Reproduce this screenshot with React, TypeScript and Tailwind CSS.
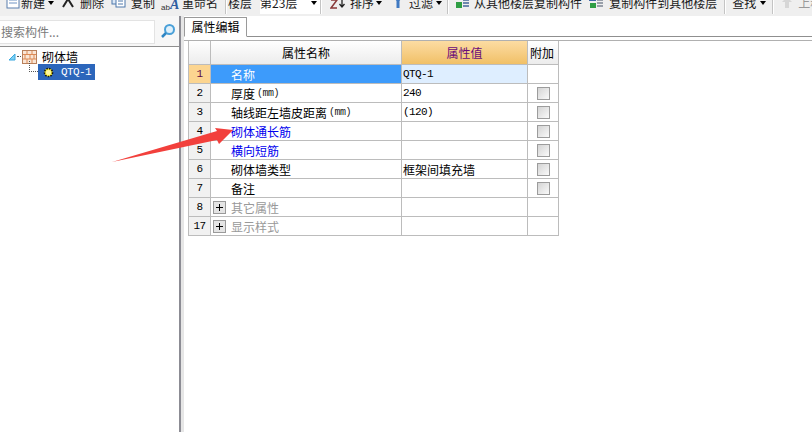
const cjk = "font-['Noto_Sans_CJK_SC','Liberation_Sans',sans-serif] text-[12px] leading-none";
const mono = "font-['Liberation_Mono','Noto_Sans_CJK_SC',monospace] text-[11px] tracking-[-0.6px]";

function Caret() {
  return <span className="block w-0 h-0 border-x-[3px] border-x-transparent border-t-[4px] border-t-black" />;
}

function Sep() {
  return <span className="block w-[2px] h-full bg-[#c4c4c4] border-r border-white" />;
}

function Toolbar() {
  return (
    <div className={`${cjk} h-4 flex bg-[#efefef] text-[#1a1a1a] overflow-hidden`}>
      <div className="flex items-center h-[16px] -mt-[5px] whitespace-nowrap">
        <svg width="16" height="16" className="ml-[5px] mt-[3px]" viewBox="0 0 16 16">
          <rect x="2" y="0" width="12" height="11" fill="#fff" stroke="#5b7fae" />
          <path d="M4 3h8M4 6h8" stroke="#6f93c4" />
        </svg>
        <span>新建</span>
        <span className="ml-[3px]"><Caret /></span>
        <svg width="12" height="12" className="ml-[8px]" viewBox="0 0 12 12">
          <path d="M1 10 6 2l5 8" fill="none" stroke="#222" strokeWidth="2" />
        </svg>
        <span className="ml-[6px]">删除</span>
        <svg width="15" height="14" className="ml-[7px]" viewBox="0 0 15 14">
          <rect x="1" y="0" width="8" height="8" fill="#dce8f6" stroke="#4f78ab" />
          <rect x="5" y="2" width="9" height="9" fill="#fff" stroke="#4f78ab" />
          <path d="M7 5h5M7 8h5" stroke="#4f78ab" />
        </svg>
        <span className="ml-[5px]">复制</span>
        <span className="ml-[6px] w-[16px] flex items-end text-[#333] mt-[3px]">
          <span className="font-['Liberation_Sans'] text-[8px]">ab</span>
          <span className="font-['Liberation_Serif'] text-[14px] font-bold italic text-[#2f5d9e]">A</span>
        </span>
        <span className="ml-[5px]">重命名</span>
        <span className="ml-[7px] h-[21px] flex"><Sep /></span>
        <span className="ml-[1px]">楼层</span>
        <span className="ml-[8px] w-[60px] bg-white h-[21px] flex items-center">
          第23层
          <span className="ml-[14px]"><Caret /></span>
        </span>
        <span className="h-[21px] flex"><Sep /></span>
        <svg width="16" height="14" className="ml-[8px]" viewBox="0 0 16 14">
          <path d="M1 4h6L1 12h6" fill="none" stroke="#8a3a3a" strokeWidth="1.5" />
          <path d="M12 1v10M9.5 8l2.5 3 2.5-3" fill="none" stroke="#222" strokeWidth="1.3" />
        </svg>
        <span className="ml-[4px]">排序</span>
        <span className="ml-[2px]"><Caret /></span>
        <svg width="10" height="14" className="ml-[11px]" viewBox="0 0 10 14">
          <path d="M0 0h10L6.5 5v7h-3V5z" fill="#3f79c2" />
        </svg>
        <span className="ml-[6px]">过滤</span>
        <span className="ml-[3px]"><Caret /></span>
        <span className="ml-[5px] h-[21px] flex"><Sep /></span>
        <svg width="14" height="14" className="ml-[6px]" viewBox="0 0 14 14">
          <rect x="0" y="0" width="7" height="4" fill="#5d7fa8" />
          <rect x="1" y="6" width="6" height="6" fill="#2f9e44" />
          <path d="M8 1h6M8 4h6M8 7h6M8 10h6" stroke="#44679a" strokeWidth="1.6" />
        </svg>
        <span className="ml-[5px]">从其他楼层复制构件</span>
        <svg width="14" height="14" className="ml-[7px]" viewBox="0 0 14 14">
          <rect x="0" y="0" width="7" height="5" fill="#3f67a8" />
          <rect x="1" y="7" width="6" height="5" fill="#2f9e44" />
          <path d="M8 1h6M8 4h6M8 7h6M8 10h6" stroke="#7d8794" strokeWidth="1.6" />
        </svg>
        <span className="ml-[6px]">复制构件到其他楼层</span>
        <span className="ml-[7px] h-[21px] flex"><Sep /></span>
        <span className="ml-[6px]">查找</span>
        <span className="ml-[4px]"><Caret /></span>
        <span className="ml-[6px] h-[21px] flex"><Sep /></span>
        <svg width="10" height="12" className="ml-[8px]" viewBox="0 0 10 12">
          <path d="M5 0 10 5H7v6H3V5H0z" fill="#d6d6d6" />
        </svg>
        <span className="ml-[6px] text-[#999]">上移</span>
      </div>
    </div>
  );
}

function Tree() {
  return (
    <div className={`${cjk} relative pl-2 pt-[2px] text-black`}>
      <div className="flex items-center h-[15px]">
        <svg width="8" height="8" viewBox="0 0 8 8">
          <path d="M7 1v6H1z" fill="#7fd0f2" stroke="#38a8e0" />
        </svg>
        <span className="w-[6px] ml-[1px] border-t border-dotted border-[#555]" />
        <svg width="15" height="14" className="ml-[-1px]" viewBox="0 0 15 14">
          <rect x="0.5" y="0.5" width="14" height="13" fill="#f9e6d6" stroke="#b9805b" />
          <path d="M1 4.5h13M1 9h13M5 1v3.5M10 1v3.5M3 4.5V9M8 4.5V9M12 4.5V9M5 9v4M10 9v4" stroke="#dd8a55" />
        </svg>
        <span className="ml-[5px]">砌体墙</span>
      </div>
      <div className="flex items-center ml-[21px] h-[16px]">
        <span className="w-[9px] h-[11px] -mt-[11px] border-l border-b border-dotted border-[#555]" />
        <div className="w-[57px] h-[16px] bg-[#2c66bb] flex items-center text-white">
          <svg width="11" height="11" className="ml-[5px]" viewBox="0 0 11 11">
            <circle cx="5.5" cy="5.5" r="4" fill="#f8ee30" stroke="#111" strokeWidth="1.6" strokeDasharray="1.5 1.2" />
            <circle cx="5.5" cy="5.5" r="2.5" fill="#fdf7a0" />
          </svg>
          <span className={`${mono} ml-[7px]`}>QTQ-1</span>
        </div>
      </div>
    </div>
  );
}

function LeftPanel() {
  return (
    <div className="w-[179px] shrink-0 flex flex-col bg-white">
      <div className="h-[31px] pt-[4px] flex items-start bg-[#f7f7f7] border-b border-b-[#8f8f8f]">
        <div className={`${cjk} w-[155px] h-[24px] bg-white border border-[#e3e3e3] border-l-0 flex items-center pl-px text-[#7a7a7a]`}>
          搜索构件...
        </div>
        <svg width="16" height="16" className="ml-[5px] mt-[3px]" viewBox="0 0 16 16">
          <circle cx="9.5" cy="6.5" r="4.5" fill="#dff0fb" stroke="#4aa0d8" strokeWidth="2" />
          <path d="M6 10l-4 4" stroke="#2f86c4" strokeWidth="2.5" />
        </svg>
      </div>
      <Tree />
    </div>
  );
}

function Splitter() {
  return (
    <div className="w-[9px] shrink-0 flex">
      <span className="w-[2px] bg-[#8c8c94]" />
      <span className="w-[3px] bg-[#e6e6e6]" />
      <span className="w-px bg-[#9a9aa4]" />
      <span className="w-[3px] bg-white" />
    </div>
  );
}

const rows = [
  { no: "1", name: "名称", val: "QTQ-1", active: true },
  { no: "2", name: "厚度", unit: "(mm)", val: "240", check: true },
  { no: "3", name: "轴线距左墙皮距离", unit: "(mm)", val: "(120)", check: true },
  { no: "4", name: "砌体通长筋", blue: true, check: true },
  { no: "5", name: "横向短筋", blue: true, check: true },
  { no: "6", name: "砌体墙类型", val: "框架间填充墙", check: true },
  { no: "7", name: "备注", check: true },
  { no: "8", name: "其它属性", group: true },
  { no: "17", name: "显示样式", group: true },
];

function Row({ r }: { r: (typeof rows)[number] }) {
  return (
    <div className="flex h-[19px] border-b border-[#bcbcbc]">
      <div className={`${mono} w-[22px] shrink-0 flex items-center justify-center pt-px border-r border-[#bcbcbc] ${r.active ? "bg-[#fcd590] text-[#5a0a4a]" : "bg-[#f1f1f1] text-black"}`}>
        {r.no}
      </div>
      <div className={`w-[191px] shrink-0 flex items-center pt-px border-r border-[#bcbcbc] ${r.active ? "bg-[#3d9bfb] text-white" : r.blue ? "text-[#0000ee]" : r.group ? "text-[#999]" : "text-black"}`}>
        {r.group ? (
          <span className="ml-[2px] mr-[5px] w-[13px] h-[13px] bg-[#e4e4e4] border border-[#9a9a9a] flex items-center justify-center relative">
            <span className="absolute w-[7px] h-px bg-black" />
            <span className="absolute h-[7px] w-px bg-black" />
          </span>
        ) : (
          <span className="w-[20px]" />
        )}
        <span>{r.name}</span>
        {r.unit && <span className="font-['Liberation_Mono',monospace] text-[10px] tracking-[-0.5px] ml-[2px] text-[#222]">{r.unit}</span>}
      </div>
      <div className={`w-[126px] shrink-0 flex items-center pl-[1px] pt-px border-r border-[#bcbcbc] ${r.active ? "bg-[#deeeff]" : ""}`}>
        {r.val && <span className={r.val === "框架间填充墙" ? "" : mono}>{r.val}</span>}
      </div>
      <div className="w-[31px] shrink-0 flex items-center justify-center border-r border-[#bcbcbc]">
        {r.check && <span className="w-[13px] h-[13px] border border-[#9c9c9c] bg-gradient-to-br from-[#d4d4d4] to-[#fafafa]" />}
      </div>
    </div>
  );
}

function PropertyPanel() {
  return (
    <div className={`${cjk} flex-1 flex flex-col bg-white text-black -ml-[4px]`}>
      <div className="h-[21px] flex items-end border-b border-[#8f8f8f]">
        <div className="w-[63px] h-[20px] -mb-px flex items-center justify-center bg-white border border-[#9a9a9a] border-b-white">
          属性编辑
        </div>
      </div>
      <div className="h-[4px] border-b border-[#b0b0b0]" />
      <div className="ml-[4px] w-[371px] border-l border-[#bcbcbc]">
        <div className="flex h-[24px] border-b border-[#bcbcbc]">
          <div className="w-[22px] bg-gradient-to-b from-white to-[#ececec] border-r border-[#bcbcbc]" />
          <div className="w-[191px] flex items-center justify-center bg-gradient-to-b from-white to-[#ececec] border-r border-[#bcbcbc]">
            属性名称
          </div>
          <div className="w-[126px] flex items-center justify-center bg-gradient-to-b from-[#fcdca2] to-[#f1c066] border-r border-[#bcbcbc] text-[#6a0a7a]">
            属性值
          </div>
          <div className="w-[31px] flex items-center pl-[2px] bg-gradient-to-b from-white to-[#ececec] border-r border-[#bcbcbc]">
            附加
          </div>
        </div>
        {rows.map((r) => (
          <Row key={r.no} r={r} />
        ))}
      </div>
    </div>
  );
}

export default function App() {
  return (
    <div className="relative w-[812px] h-[432px] flex flex-col overflow-hidden bg-white">
      <Toolbar />
      <div className="flex flex-1 min-h-0">
        <LeftPanel />
        <Splitter />
        <PropertyPanel />
      </div>
      {/* red annotation arrow */}
      <svg className="absolute left-0 top-0 pointer-events-none" width="812" height="432">
        <path d="M112 162 217 131 215 128 233 130 219 144 217 140z" fill="#f2403c" />
      </svg>
    </div>
  );
}
